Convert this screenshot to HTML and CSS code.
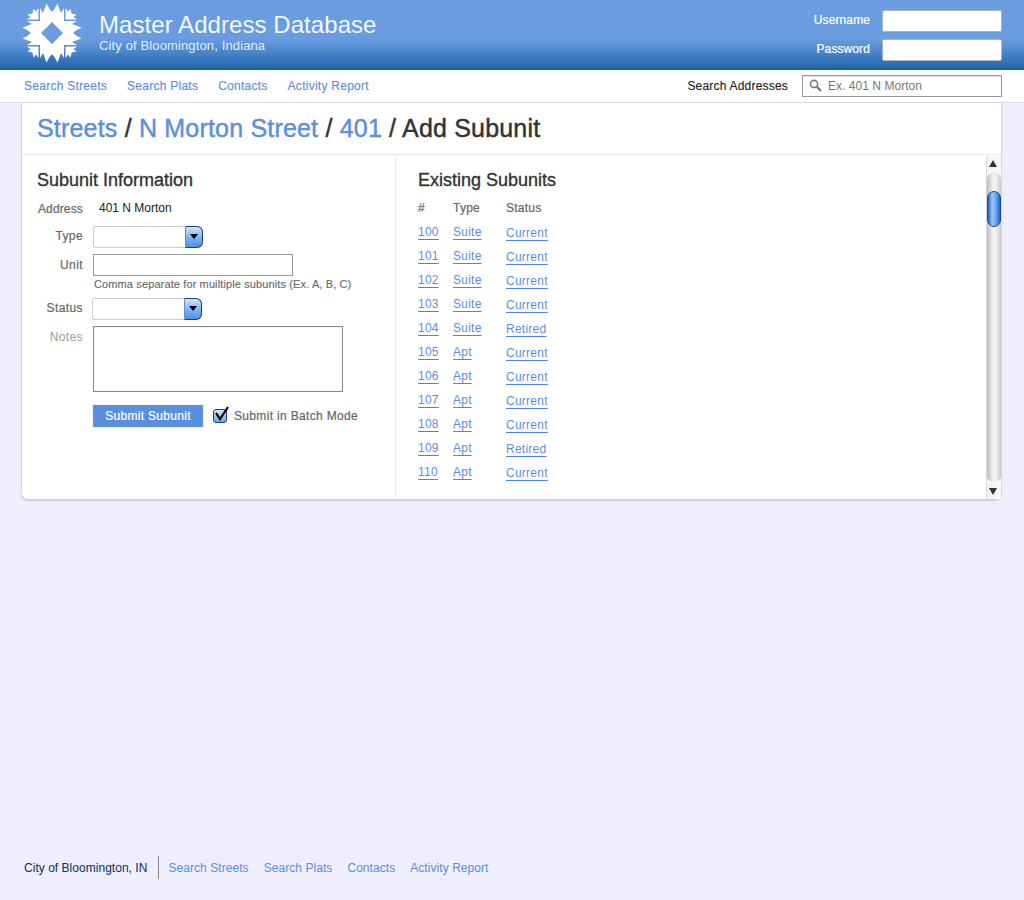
FILE: index.html
```html
<!DOCTYPE html>
<html lang="en">
<head>
<meta charset="utf-8">
<title>Master Address Database</title>
<link rel="stylesheet" href="styles.css">
</head>
<body>
<header class="banner">
  <div class="brand">
    <svg class="logo" width="60" height="60" viewBox="-30 -30 60 60" aria-hidden="true">
      <g fill="#fff">
        <path fill-rule="evenodd" d="M-12 -12 L-12 -25 L-9 -20 L-5.5 -29.5 L-2.5 -24 L0 -21 L2.5 -24 L5.5 -29.5 L9 -20 L12 -25 L12 -12 L25 -12 L20 -9 L29.5 -5.5 L24 -2.5 L21 0 L24 2.5 L29.5 5.5 L20 9 L25 12 L12 12 L12 25 L9 20 L5.5 29.5 L2.5 24 L0 21 L-2.5 24 L-5.5 29.5 L-9 20 L-12 25 L-12 12 L-25 12 L-20 9 L-29.5 5.5 L-24 2.5 L-21 0 L-24 -2.5 L-29.5 -5.5 L-20 -9 L-25 -12 Z M0 -11 L-11 0 L0 11 L11 0 Z"/>
        <path id="corner" d="M-13.5 -13.5 L-13.5 -25 L-16 -21.5 L-18.5 -24.5 L-19.5 -19.5 L-24.5 -18.5 L-21.5 -16 L-25 -13.5 Z"/>
        <use href="#corner" transform="rotate(90)"/>
        <use href="#corner" transform="rotate(180)"/>
        <use href="#corner" transform="rotate(270)"/>
      </g>
    </svg>
    <div class="brand-text">
      <div class="app-name">Master Address Database</div>
      <div class="city-name">City of Bloomington, Indiana</div>
    </div>
  </div>
  <form class="login">
    <label class="login-row"><span>Username</span><input class="login-input" type="text"></label>
    <label class="login-row"><span>Password</span><input class="login-input" type="password"></label>
  </form>
</header>

<nav class="topnav">
  <div class="nav-links">
    <a href="#">Search Streets</a>
    <a href="#">Search Plats</a>
    <a href="#">Contacts</a>
    <a href="#">Activity Report</a>
  </div>
  <div class="search">
    <span class="search-label">Search Addresses</span>
    <div class="search-box">
      <svg width="13" height="13" viewBox="0 0 13 13" aria-hidden="true"><circle cx="5" cy="5" r="3.6" fill="none" stroke="#777" stroke-width="1.6"/><path d="M7.8 7.8 L12 12" stroke="#777" stroke-width="2.2"/></svg>
      <span>Ex. 401 N Morton</span>
    </div>
  </div>
</nav>

<main class="panel">
  <h1 class="crumbs"><a href="#">Streets</a> / <a href="#">N Morton Street</a> / <a href="#">401</a> / Add Subunit</h1>
  <div class="columns">
    <section class="form-col">
      <h2>Subunit Information</h2>
      <div class="row row-address"><span class="lbl lbl-address">Address</span><span class="addr-value">401 N Morton</span></div>
      <div class="row row-type"><span class="lbl">Type</span><div class="select"><span class="select-btn"></span></div></div>
      <div class="row row-unit"><span class="lbl">Unit</span><div class="text-input"></div></div>
      <div class="hint">Comma separate for muiltiple subunits (Ex. A, B, C)</div>
      <div class="row row-status"><span class="lbl">Status</span><div class="select select-status"><span class="select-btn"></span></div></div>
      <div class="row row-notes"><span class="lbl lbl-light">Notes</span><div class="textarea"></div></div>
      <div class="actions">
        <button class="submit" type="button">Submit Subunit</button>
        <span class="check"><svg width="16" height="18" viewBox="0 0 16 18" aria-hidden="true"><path d="M3 7 L7 13 L15 1" fill="none" stroke="#000" stroke-width="2.2"/></svg></span>
        <span class="check-label">Submit in Batch Mode</span>
      </div>
    </section>
    <section class="list-col">
      <h2>Existing Subunits</h2>
      <table class="units">
        <thead><tr><th>#</th><th>Type</th><th>Status</th></tr></thead>
        <tbody>
          <tr><td><a href="#">100</a></td><td><a href="#">Suite</a></td><td><a href="#">Current</a></td></tr>
          <tr><td><a href="#">101</a></td><td><a href="#">Suite</a></td><td><a href="#">Current</a></td></tr>
          <tr><td><a href="#">102</a></td><td><a href="#">Suite</a></td><td><a href="#">Current</a></td></tr>
          <tr><td><a href="#">103</a></td><td><a href="#">Suite</a></td><td><a href="#">Current</a></td></tr>
          <tr><td><a href="#">104</a></td><td><a href="#">Suite</a></td><td><a href="#">Retired</a></td></tr>
          <tr><td><a href="#">105</a></td><td><a href="#">Apt</a></td><td><a href="#">Current</a></td></tr>
          <tr><td><a href="#">106</a></td><td><a href="#">Apt</a></td><td><a href="#">Current</a></td></tr>
          <tr><td><a href="#">107</a></td><td><a href="#">Apt</a></td><td><a href="#">Current</a></td></tr>
          <tr><td><a href="#">108</a></td><td><a href="#">Apt</a></td><td><a href="#">Current</a></td></tr>
          <tr><td><a href="#">109</a></td><td><a href="#">Apt</a></td><td><a href="#">Retired</a></td></tr>
          <tr><td><a href="#">110</a></td><td><a href="#">Apt</a></td><td><a href="#">Current</a></td></tr>
        </tbody>
      </table>
      <div class="scrollbar" aria-hidden="true">
        <span class="sb-btn sb-up"></span>
        <span class="sb-track"><span class="sb-thumb"></span></span>
        <span class="sb-btn sb-down"></span>
      </div>
    </section>
  </div>
</main>

<footer class="foot">
  <span class="foot-city">City of Bloomington, IN</span>
  <a href="#">Search Streets</a>
  <a href="#">Search Plats</a>
  <a href="#">Contacts</a>
  <a href="#">Activity Report</a>
</footer>
</body>
</html>
```
FILE: styles.css
```css
* { box-sizing: border-box; }
html, body { margin: 0; height: 900px; }
body {
  background: #eeeefd;
  font-family: "Liberation Sans", Arial, sans-serif;
  font-size: 12px;
  color: #333;
  display: flex;
  flex-direction: column;
  overflow: hidden;
}
a { color: #5a8fdf; text-decoration: none; }

.banner {
  height: 70px;
  flex: none;
  background: linear-gradient(#6a9de0 0, #6a9de0 38px, #5089cf 50px, #1a62a8 70px);
  display: flex;
  justify-content: space-between;
  padding: 3px 22px 0;
}
.brand { display: flex; }
.logo { display: block; }
.brand-text { margin-left: 17px; padding-top: 7px; color: #fff; }
.app-name { font-size: 24px; line-height: 29px; color: #f4f8fe; letter-spacing: 0.06px; }
.city-name { font-size: 13px; line-height: 14px; color: #e4edf9; letter-spacing: 0.13px; }
.login { padding-top: 7px; }
.login-row {
  display: flex;
  justify-content: flex-end;
  align-items: center;
  gap: 12px;
  height: 22px;
  margin-bottom: 7px;
  color: #fff;
  font-size: 12px;
  letter-spacing: 0.1px;
  -webkit-text-stroke: 0.2px #fff;
}
.login-row span { padding-bottom: 2px; }
.login-input {
  width: 120px;
  height: 22px;
  margin: 0;
  padding: 0;
  background: #fff;
  border: 1px solid #a9b4c0;
  border-radius: 2px;
}

.topnav {
  height: 33px;
  flex: none;
  background: #fff;
  border-bottom: 1px solid #dcdce4;
  display: flex;
  justify-content: space-between;
  align-items: center;
  padding: 0 22px 1px 24px;
}
.nav-links { display: flex; gap: 20px; letter-spacing: 0.26px; -webkit-text-stroke: 0.15px currentColor; }
.search { display: flex; align-items: center; gap: 14px; }
.search-label { color: #222; letter-spacing: 0.2px; -webkit-text-stroke: 0.15px currentColor; }
.search-box {
  width: 200px;
  height: 22px;
  border: 1px solid #999;
  box-shadow: inset 0 1px 1px #ddd;
  display: flex;
  align-items: center;
  gap: 6px;
  padding-left: 6px;
  color: #777;
  letter-spacing: 0.04px;
}

.panel {
  width: 981px;
  height: 397px;
  flex: none;
  margin-left: 21px;
  background: #fff;
  border: 1px solid #d6d6e6;
  border-top: 0;
  border-radius: 0 0 7px 7px;
  box-shadow: 0 1px 1px #c8c8dc;
  display: flex;
  flex-direction: column;
}
.crumbs {
  margin: 0;
  height: 52px;
  flex: none;
  padding: 9px 0 0 15px;
  font-size: 25px;
  line-height: 32px;
  font-weight: normal;
  letter-spacing: 0.19px;
  -webkit-text-stroke: 0.45px currentColor;
  color: #333;
  border-bottom: 1px solid #eaeaf0;
}
.columns { display: flex; flex: 1; min-height: 0; }
h2 {
  margin: 0;
  font-size: 18px;
  line-height: 22px;
  font-weight: normal;
  -webkit-text-stroke: 0.35px currentColor;
  color: #333;
}
.form-col {
  width: 374px;
  flex: none;
  border-right: 1px solid #eaeaf0;
  padding: 14px 0 0 15px;
  margin-bottom: 2px;
}
.row { display: flex; }
.lbl {
  width: 46px;
  text-align: right;
  color: #666;
  flex: none;
  letter-spacing: 0.4px;
  -webkit-text-stroke: 0.2px currentColor;
}
.lbl-address { letter-spacing: 0.15px; }
.lbl-light { color: #999; -webkit-text-stroke: 0; }
.row-address { margin-top: 11px; height: 14px; line-height: 14px; }
.addr-value { margin-left: 16px; color: #222; line-height: 12px; }
.row-type { margin-top: 10px; align-items: center; }
.row-type .lbl, .row-status .lbl { padding-bottom: 2px; }
.row-unit { margin-top: 6px; align-items: flex-start; }
.row-unit .lbl { line-height: 22px; }
.select {
  width: 110px;
  height: 22px;
  margin-left: 10px;
  background: #fff;
  border: 1px solid #ccc;
  border-radius: 2px 6px 6px 2px;
  position: relative;
}
.select-status { margin-left: 9px; }
.select-btn {
  position: absolute;
  right: -1px;
  top: -1px;
  width: 18px;
  height: 22px;
  background: linear-gradient(#cfe4fb, #6fb0f3 60%, #4f93e0);
  border: 1px solid #20407c;
  border-left: 1px solid #5c90c8;
  border-radius: 0 6px 6px 0;
}
.select-btn::after {
  content: "";
  position: absolute;
  left: 4px;
  top: 7px;
  border: 4px solid transparent;
  border-top: 5px solid #000;
  border-bottom: 0;
}
.text-input {
  width: 200px;
  height: 22px;
  margin-left: 10px;
  border: 1px solid #999;
  background: #fff;
}
.hint {
  margin: 1px 0 0 57px;
  font-size: 11px;
  line-height: 14px;
  color: #666;
  letter-spacing: 0.12px;
  -webkit-text-stroke: 0.1px currentColor;
}
.row-status { margin-top: 7px; align-items: center; }
.row-notes { margin-top: 6px; }
.row-notes .lbl { line-height: 22px; }
.textarea {
  width: 250px;
  height: 66px;
  margin-left: 10px;
  border: 1px solid #888;
  box-shadow: inset 0 0 1px #bbb;
}
.actions {
  display: flex;
  align-items: center;
  margin: 13px 0 0 56px;
}
.submit {
  width: 110px;
  height: 22px;
  background: #5a8fdf;
  border: 0;
  padding: 0;
  color: #fff;
  font: 12px "Liberation Sans", Arial, sans-serif;
  letter-spacing: 0.3px;
  -webkit-text-stroke: 0.2px #fff;
  box-shadow: 0 0 1px #bbb;
}
.check {
  width: 14px;
  height: 14px;
  margin-left: 10px;
  position: relative;
  background: linear-gradient(#cfe4fb, #6fa8ee);
  border: 1px solid #1e3f7a;
  border-radius: 3px;
}
.check svg { position: absolute; left: -1px; top: -4px; }
.check-label { margin-left: 7px; color: #666; letter-spacing: 0.33px; -webkit-text-stroke: 0.2px #666; }

.list-col {
  flex: 1;
  position: relative;
  padding: 14px 0 0 22px;
}
.units { border-collapse: collapse; margin-top: 10px; letter-spacing: 0.25px; }
.units tr { height: 24px; }
.units thead tr { height: 14px; }
.units th {
  text-align: left;
  font-weight: normal;
  color: #666;
  height: 14px;
  line-height: 14px;
  padding: 0;
  -webkit-text-stroke: 0.2px currentColor;
}
.units td { height: 24px; padding: 11px 0 0; vertical-align: top; line-height: 13px; }
.units th:nth-child(1), .units td:nth-child(1) { width: 35px; }
.units th:nth-child(2), .units td:nth-child(2) { width: 53px; }
.units td:nth-child(3) { padding-top: 12px; line-height: 12px; }
.units a { text-decoration: underline; text-underline-offset: 3px; text-decoration-color: #4a86dc; }

.scrollbar {
  position: absolute;
  right: 0;
  top: 1px;
  bottom: 0;
  width: 15px;
  display: flex;
  flex-direction: column;
  border-left: 1px solid #d8d8d8;
  background: #fff;
}
.sb-btn {
  height: 16px;
  flex: none;
  background: linear-gradient(90deg, #f0f0f0, #fafafa);
  position: relative;
}
.sb-btn::after {
  content: "";
  position: absolute;
  left: 2px;
  border: 4px solid transparent;
}
.sb-up::after { top: 4px; border-top: 0; border-bottom: 7px solid #333; }
.sb-down::after { top: 5px; border-bottom: 0; border-top: 7px solid #333; }
.sb-track {
  flex: 1;
  background: linear-gradient(90deg, #bdbdbd, #eee 40%, #f4f4f4 60%, #c8c8c8);
  border-radius: 7px;
  position: relative;
}
.sb-thumb {
  position: absolute;
  left: 0;
  right: 0;
  top: 19px;
  height: 36px;
  border-radius: 7px;
  border: 1px solid #174a96;
  background: linear-gradient(90deg, #1f63c6, #9cc6f5 35%, #6fa8ec 65%, #1f63c6);
}

.foot {
  margin-top: auto;
  height: 44px;
  flex: none;
  display: flex;
  align-items: flex-start;
  padding: 0 0 0 24px;
  line-height: 25px;
  letter-spacing: 0.06px;
}
.foot a { margin-left: 15px; }
.foot-city {
  color: #0c2f5c;
  height: 23px;
  padding-right: 11px;
  border-right: 1px solid #888;
  margin-right: -6px;
  letter-spacing: 0.03px;
}
```
